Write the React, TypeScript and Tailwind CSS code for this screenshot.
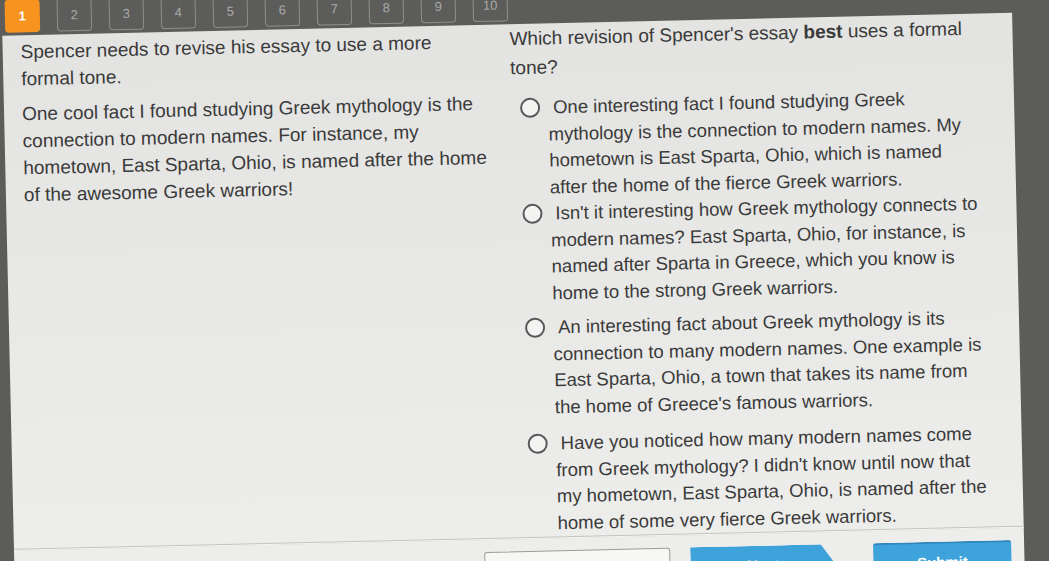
import React from 'react'

const options = [
  {
    mt: 'mt-[13px]',
    lines: [
      'One interesting fact I found studying Greek',
      'mythology is the connection to modern names. My',
      'hometown is East Sparta, Ohio, which is named',
      'after the home of the fierce Greek warriors.',
    ],
  },
  {
    mt: 'mt-0',
    lines: [
      "Isn't it interesting how Greek mythology connects to",
      'modern names? East Sparta, Ohio, for instance, is',
      'named after Sparta in Greece, which you know is',
      'home to the strong Greek warriors.',
    ],
  },
  {
    mt: 'mt-[8px]',
    lines: [
      'An interesting fact about Greek mythology is its',
      'connection to many modern names. One example is',
      'East Sparta, Ohio, a town that takes its name from',
      "the home of Greece's famous warriors.",
    ],
  },
  {
    mt: 'mt-[10px]',
    lines: [
      'Have you noticed how many modern names come',
      "from Greek mythology? I didn't know until now that",
      'my hometown, East Sparta, Ohio, is named after the',
      'home of some very fierce Greek warriors.',
    ],
  },
]

const numbers = [1, 2, 3, 4, 5, 6, 7, 8, 9, 10]

function QuestionNav() {
  return (
    <div className="h-[44px] flex items-end gap-[17px] pl-[31px] pb-[3px] shrink-0">
      {numbers.map((n) =>
        n === 1 ? (
          <div
            key={n}
            className="w-[35px] h-[33px] rounded-[4px] bg-[#f7931f] flex items-center justify-center text-[13px] font-bold text-white"
          >
            {n}
          </div>
        ) : (
          <div
            key={n}
            className="w-[35px] h-[33px] rounded-[4px] border-[1.5px] border-[#8e8e8c] flex items-center justify-center text-[13px] text-[#a9a9a7]"
          >
            {n}
          </div>
        )
      )}
    </div>
  )
}

function Option({ lines, mt }: { lines: string[]; mt: string }) {
  return (
    <div className={`flex items-start ${mt}`}>
      <div className="ml-[9px] mt-[3px] w-[20px] h-[20px] shrink-0 rounded-full border-[2px] border-[#585858] bg-[#f3f3f1]" />
      <div className="ml-[8px] text-[18.5px] leading-[26.5px] whitespace-nowrap">
        {lines.map((l, i) => (
          <div key={i} className={i === 0 ? 'pl-[5px]' : ''}>
            {l}
          </div>
        ))}
      </div>
    </div>
  )
}

export default function App() {
  return (
    <div className="w-[1049px] h-[561px] overflow-hidden bg-[#5c5c5a] font-['Liberation_Sans',Arial,sans-serif]">
      <div className="w-[1089px] h-[601px] -ml-[20px] -mt-[20px] -rotate-[1.3deg] flex flex-col">
        <QuestionNav />

        {/* Question card */}
        <div className="flex-1 ml-[28px] w-[1010px] bg-linear-to-b from-[#e3e3e1] to-[#eeeeec] flex flex-col text-[#3a3a3a]">
          <div className="flex">
            <div className="w-[507px] shrink-0 pl-[18px] pt-[2.5px] text-[19px] leading-[27px] whitespace-nowrap">
              <p>
                Spencer needs to revise his essay to use a more
                <br />
                formal tone.
              </p>
              <p className="mt-[8px]">
                One cool fact I found studying Greek mythology is the
                <br />
                connection to modern names. For instance, my
                <br />
                hometown, East Sparta, Ohio, is named after the home
                <br />
                of the awesome Greek warriors!
              </p>
            </div>

            <div className="flex-1">
              <p className="text-[19px] leading-[29px] whitespace-nowrap">
                Which revision of Spencer's essay <span className="font-bold">best</span> uses a formal
                <br />
                tone?
              </p>
              {options.map((o, i) => (
                <Option key={i} lines={o.lines} mt={o.mt} />
              ))}
            </div>
          </div>

          <div className="h-[2px] bg-[#c3c3c1] border-b border-[#f5f5f3]" />

          <div className="flex items-start mt-[12px] pl-[470px]">
            <button className="w-[186px] h-[40px] rounded-[3px] border border-[#9c9c9a] bg-[#f7f7f5] text-[14px] text-[#555] pt-[14px]">
              Mark this and return
            </button>
            <button className="ml-[20px] w-[145px] h-[40px] bg-[#3ea3da] text-white text-[15px] font-bold [clip-path:polygon(0_0,90%_0,100%_50%,90%_100%,0_100%)]">
              Next
            </button>
            <button className="ml-[38px] w-[138px] h-[40px] rounded-[3px] bg-[#3ea3da] border-t-2 border-[#2f86bd] text-white text-[15px] font-bold">
              Submit
            </button>
          </div>
        </div>
      </div>
    </div>
  )
}
